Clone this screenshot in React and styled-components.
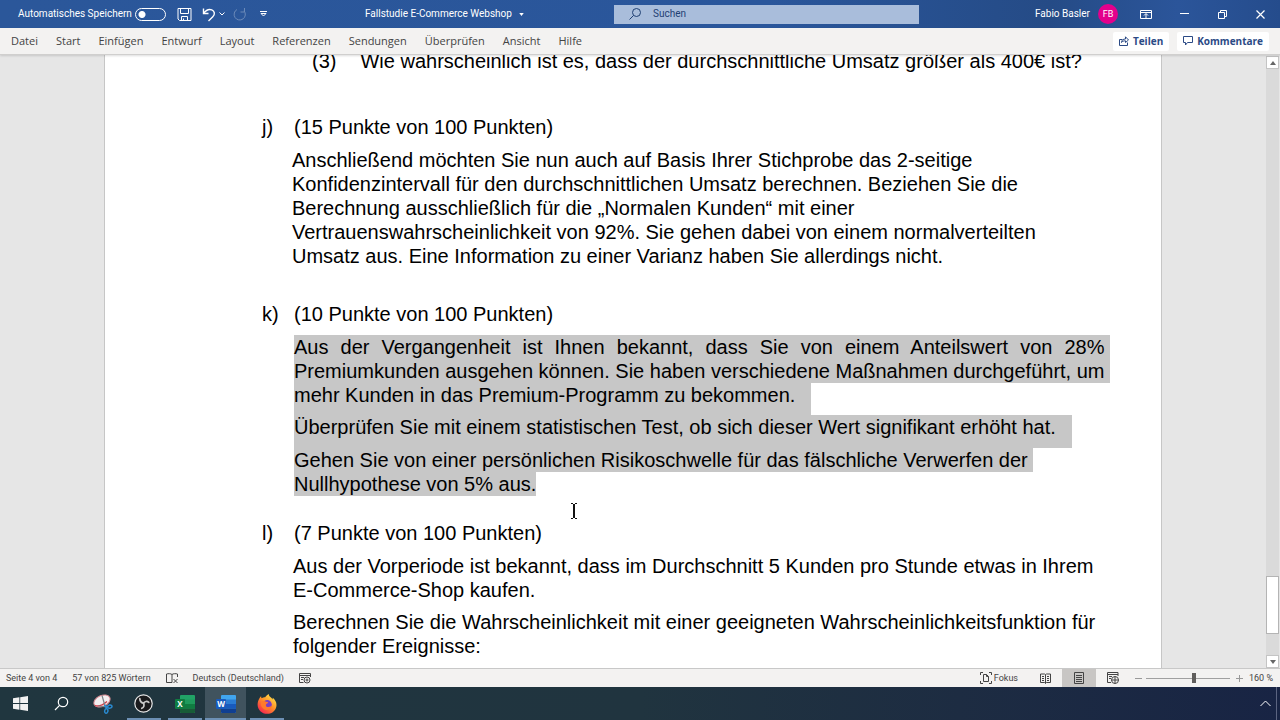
import React from "react";
import styled, { createGlobalStyle } from "styled-components";

const GlobalStyle = createGlobalStyle`
  *, *::before, *::after { box-sizing: border-box; }
  html, body, #root { height: 100%; }
  body { margin: 0; overflow: hidden; font-family: "Open Sans", "Noto Sans", sans-serif; }
  button { font: inherit; color: inherit; background: none; border: 0; padding: 0; margin: 0; }
  svg { display: block; flex: none; }
  p, h2 { margin: 0; }
`;

const Window = styled.div`
  height: 100vh;
  display: flex;
  flex-direction: column;
  background: #e6e6e6;
`;

const TitleBar = styled.header`
  flex: none;
  height: 28px;
  display: grid;
  grid-template-columns: 614fr 305fr 361fr;
  align-items: center;
  background: linear-gradient(90deg, #2b579a 0%, #2a569b 60%, #254b86 82%, #2b559a 92%, #254c8c 100%);
  color: #fff;
  font-family: Roboto, sans-serif;
  font-size: 10px;
  line-height: 16px;
`;

const QuickAccess = styled.div`
  display: flex;
  align-items: center;
  padding-left: 18px;
`;

const AutoSave = styled.label`
  display: flex;
  align-items: center;
  justify-content: space-between;
  width: 148px;
  white-space: nowrap;
`;

const Toggle = styled.input`
  appearance: none;
  flex: none;
  width: 31px;
  height: 13px;
  margin: 0;
  border: 1px solid #fff;
  border-radius: 7px;
  background: radial-gradient(circle at 6px 50%, #fff 3px, transparent 4px);
`;

const IconButton = styled.button`
  display: flex;
  align-items: center;
  justify-content: center;
  width: ${(p) => p.$w || 24}px;
  height: 24px;
`;

const DocTitle = styled.button`
  display: flex;
  align-items: center;
  gap: 7px;
  margin-left: 89px;
  white-space: nowrap;
`;

const SearchBox = styled.label`
  display: flex;
  align-items: center;
  gap: 12px;
  height: 19px;
  padding-left: 15px;
  background: #a9bddb;
  color: #1f3f73;
`;

const SearchInput = styled.input`
  flex: 1;
  min-width: 0;
  border: 0;
  padding: 0;
  background: none;
  font: inherit;
  color: inherit;
  &::placeholder { color: #1f3f73; opacity: 1; }
`;

const Account = styled.div`
  display: flex;
  align-items: center;
  justify-content: flex-end;
  padding-right: 1px;
`;

const Avatar = styled.span`
  width: 20px;
  height: 20px;
  margin: 0 9px 0 8px;
  border-radius: 50%;
  background: #e3008c;
  font-size: 9px;
  line-height: 20px;
  text-align: center;
`;

const WindowButton = styled(IconButton)`
  width: 38px;
`;

const Ribbon = styled.nav`
  position: relative;
  z-index: 1;
  flex: none;
  height: 27px;
  display: flex;
  align-items: center;
  justify-content: space-between;
  padding: 0 11px;
  background: #f3f2f1;
  border-bottom: 1px solid #d0cfce;
  box-shadow: 0 1px 2px #0002;
  color: #444;
  font-size: 11px;
  line-height: 16px;
`;

const Tabs = styled.div`
  display: flex;
  gap: 18px;
`;

const Tab = styled.button`
  white-space: nowrap;
`;

const Actions = styled.div`
  display: flex;
  gap: 8px;
`;

const Action = styled.button`
  && {
    display: flex;
    align-items: center;
    gap: 4px;
    height: 19px;
    padding: 0 6px;
    border-radius: 2px;
    background: #fff;
    color: #2b4a85;
    font-size: 10px;
    font-weight: 700;
  }
`;

const Workspace = styled.main`
  flex: 1;
  min-height: 0;
  display: flex;
`;

const Canvas = styled.div`
  flex: 1;
  min-width: 0;
  overflow: hidden;
  display: flex;
  padding: 0 104px;
`;

const Page = styled.article`
  flex: 1;
  min-width: 0;
  padding-left: 157px;
  background: #fff;
  border: solid #c6c6c6;
  border-width: 0 1px;
  color: #000;
  font-family: "Liberation Sans", Arial, sans-serif;
  font-size: 20px;
  line-height: 24px;
  white-space: nowrap;
`;

const Question = styled.div`
  display: flex;
  gap: 24px;
  padding-left: 50px;
  margin-top: -6px;
`;

const Task = styled.section`
  margin-top: ${(p) => p.$space}px;
`;

const TaskHead = styled.h2`
  display: grid;
  grid-template-columns: 32px 1fr;
  font-size: inherit;
  font-weight: 400;
  line-height: 24px;
`;

const Para = styled.p`
  margin: ${(p) => p.$space ?? 9}px 0 0 ${(p) => p.$indent ?? 30}px;
`;

const Selection = styled.div`
  width: max-content;
  margin: 9px 0 0 32px;
`;

const SelectedLine = styled.div`
  width: ${(p) => (p.$fill ? "100%" : "fit-content")};
  padding-right: ${(p) => p.$tail}px;
  padding-bottom: ${(p) => p.$after || 0}px;
  background: #c7c7c7;
  text-align-last: ${(p) => (p.$fill ? "justify" : "left")};
`;

const ScrollBar = styled.div`
  flex: none;
  width: 14px;
  display: flex;
  flex-direction: column;
  background: #dadada;
  border: solid #e6e6e6;
  border-width: 1px 1px 0 0;
  color: #666;
`;

const ScrollTrack = styled.div`
  flex: 1;
  display: grid;
  grid-template-rows: 504fr 58fr 21fr;
`;

const ScrollThumb = styled.div`
  grid-row: 2;
  background: #fff;
  border: 1px solid #b4b4b4;
`;

const ScrollArrow = styled.button`
  && {
    display: flex;
    align-items: center;
    justify-content: center;
    height: 13px;
    background: #fff;
    border: 1px solid #c4c4c4;
  }
`;

const StatusBar = styled.footer`
  flex: none;
  height: 19px;
  display: flex;
  align-items: center;
  justify-content: space-between;
  padding: 0 7px 0 6px;
  background: #f3f2f1;
  border-top: 1px solid #c8c8c8;
  color: #444;
  font-family: Roboto, sans-serif;
  font-size: 9px;
  line-height: 16px;
  white-space: nowrap;
`;

const StatusGroup = styled.div`
  display: flex;
  align-items: center;
  gap: ${(p) => p.$gap}px;
  height: 100%;
`;

const ViewButton = styled.button`
  && {
    display: flex;
    align-items: center;
    justify-content: center;
    gap: 2px;
    min-width: 34px;
    height: 100%;
    background: ${(p) => (p.$on ? "#c8c6c4" : "none")};
  }
`;

const ZoomButton = styled(IconButton)`
  && { color: #999; }
`;

const Zoom = styled.input`
  appearance: none;
  width: 84px;
  height: 10px;
  margin: 0;
  background: linear-gradient(#a0a0a0, #a0a0a0) center / 100% 1px no-repeat;
  &::-webkit-slider-thumb {
    appearance: none;
    width: 4px;
    height: 10px;
    background: #605e5c;
  }
`;

const TaskBar = styled.nav`
  flex: none;
  height: 33px;
  display: flex;
  align-items: stretch;
  justify-content: space-between;
  background: linear-gradient(90deg, #20363f 0%, #20343f 50%, #1d2c42 75%, #182444 100%);
  color: #fff;
`;

const Apps = styled.div`
  display: flex;
`;

const AppButton = styled.button`
  && {
    display: flex;
    align-items: center;
    justify-content: center;
    width: 41px;
    background-color: ${(p) => (p.$active ? "#40535e" : "transparent")};
    background-image: ${(p) => (p.$open ? "linear-gradient(#6d90b4, #6d90b4)" : "none")};
    background-repeat: no-repeat;
    background-position: bottom center;
    background-size: ${(p) => (p.$active ? 41 : 34)}px 2px;
  }
`;

const Tray = styled.div`
  display: flex;
  align-items: center;
  margin-right: 3px;
  border-right: 1px solid #5b6480;
`;

const TextCursor = styled.svg`
  position: absolute;
  left: 570px;
  top: 503px;
`;

const Stroke = ({ w = 14, h = 14, d, sw = 1, children, ...rest }) => (
  <svg width={w} height={h} viewBox={`0 0 ${w} ${h}`} fill="none" stroke="currentColor" strokeWidth={sw} {...rest}>
    {d && <path d={d} />}
    {children}
  </svg>
);

const Caret = ({ up, w = 6, h = 4 }) => (
  <svg width={w} height={h} viewBox="0 0 6 4" fill="currentColor">
    <path d={up ? "M0 4 3 0l3 4z" : "M0 0h6L3 4z"} />
  </svg>
);

const Windows = () => (
  <svg width="15" height="15" viewBox="0 0 15 15" fill="#f2f2f2">
    <path d="M0 2.2 6.4 1.3v5.8H0zM7.2 1.2 15 0v7.1H7.2zM0 7.9h6.4v5.8L0 12.8zM7.2 7.9H15V15l-7.8-1.2z" />
  </svg>
);

const Snip = () => (
  <svg width="20" height="20" viewBox="0 0 20 20">
    <ellipse cx="9" cy="7" rx="8.500" ry="5.500" transform="rotate(-24 9 7)" fill="#f3eef0" stroke="#d98a92" strokeWidth="1" />
    <path d="M2 11.500c3 1 8-.5 12-4" fill="none" stroke="#cf3b47" strokeWidth="1.200" />
    <path d="M9 1.500l3.500 12M5 12l9 1" stroke="#7d8389" strokeWidth="1.200" />
    <g fill="none" stroke="#2a8ad0" strokeWidth="1.5">
      <path d="M11 11.500l4 1.500M12 11l1.500 3.500" />
      <ellipse cx="16.800" cy="12.600" rx="2.200" ry="1.600" transform="rotate(-15 16.800 12.600)" />
      <ellipse cx="13.300" cy="17" rx="1.600" ry="2.200" transform="rotate(12 13.300 17)" />
    </g>
  </svg>
);

const Obs = () => (
  <svg width="19" height="19" viewBox="0 0 19 19">
    <circle cx="9.5" cy="9.5" r="8.7" fill="#1b1b1d" stroke="#e8e8e8" strokeWidth="1.2" />
    <g fill="none" stroke="#c9c9c9" strokeWidth="1.7" strokeLinecap="round">
      <path d="M5.800 4.600c.1 2.400 1.500 4 3.700 4.600" />
      <path d="M9.500 9.200c1.200-2 3.600-2.300 5.300-.8" />
      <path d="M9.500 9.300c1.100 2 .4 4.100-1.700 5" />
    </g>
  </svg>
);

const Office = ({ letter, colors }) => (
  <svg width="20" height="18" viewBox="0 0 20 18">
    <rect x="5" y="0" width="15" height="18" rx="1" fill={colors[0]} />
    <path d="M5 4.500h15V9H5z" fill={colors[1]} />
    <path d="M5 9h15v4.500H5z" fill={colors[2]} />
    <path d="M5 13.500h15V17a1 1 0 0 1-1 1H6a1 1 0 0 1-1-1z" fill={colors[3]} />
    <rect x="0" y="4" width="10" height="10" rx="1" fill={colors[4]} />
    <text x="5" y="12" fill="#fff" fontSize="8" fontWeight="700" textAnchor="middle">{letter}</text>
  </svg>
);

const Firefox = () => (
  <svg width="20" height="20" viewBox="0 0 20 20">
    <defs>
      <linearGradient id="fx" x1="0.85" y1="0.1" x2="0.2" y2="0.95">
        <stop offset="0" stopColor="#ffe14a" />
        <stop offset="0.45" stopColor="#ff9328" />
        <stop offset="1" stopColor="#f5264f" />
      </linearGradient>
    </defs>
    <path d="M2.500 4.200c.4-.9 1-1.600 1.600-2-.1.900.2 1.600.7 2.100 1-.8 2.100-1.100 3.400-1.100C9.200 2 10 .9 11.800 0c-.2 2 1.200 2.700 2.700 4 .5.400.8.900 1 1.400l.3-1.600c2.200 1.900 3.700 4.400 3.700 7.100 0 5-4.100 8.900-9.400 8.900S.6 15.800.6 10.700c0-2.500.7-4.800 1.900-6.500z" fill="url(#fx)" />
    <circle cx="10.300" cy="10.600" r="4.500" fill="#7a3fc4" />
    <path d="M3.800 8.200c1.600-1.400 3.600-1.600 5.300-.4 1.300.1 2 .5 2.200 1.100-1.300.3-2.200.8-2.400 2-.2 1.500 1 2.300 2.600 2.100 1.600-.2 2.700-1 3.600-.9-1 2.600-3 4-5.500 3.800-3.600-.2-6.100-3.500-5.800-7.700z" fill="#ff7a2b" />
  </svg>
);

export default function App() {
  return (
    <Window>
      <GlobalStyle />
      <TitleBar>
        <QuickAccess>
          <AutoSave>
            Automatisches Speichern
            <Toggle type="checkbox" role="switch" />
          </AutoSave>
          <IconButton $w={37} aria-label="Speichern">
            <Stroke w={15} h={15} d="M1 1.500h13v12H2.500L1 12zM3.500 1.500v5h8v-5M4.500 13.500v-4h6v4M6.500 13.500v-2" />
          </IconButton>
          <IconButton $w={12} aria-label="Rückgängig">
            <Stroke w={14} h={15} sw={1.4} d="M1.500 1.500v5h5M1.500 6.500C4 3 7 1.800 9.800 2.800c3 1.200 3.400 4.600 1 6.900L6.500 14" />
          </IconButton>
          <IconButton $w={14} aria-label="Rückgängig-Liste"><Stroke w={6} h={4} d="M.5.5 3 3 5.500.5" /></IconButton>
          <IconButton $w={22} aria-label="Wiederholen">
            <Stroke w={14} h={14} opacity="0.3" d="M11.500 1v4h-4M4 2.500A5.600 5.600 0 1 0 11 3.800" />
          </IconButton>
          <IconButton $w={25} aria-label="Symbolleiste anpassen"><Stroke w={7} h={6} d="M0 .5h7M1 2.500h5L3.500 5z" /></IconButton>
          <DocTitle>Fallstudie E-Commerce Webshop <Caret w={5} h={3} /></DocTitle>
        </QuickAccess>
        <SearchBox>
          <Stroke w={12} h={12}><circle cx="7.500" cy="4.500" r="4" /><path d="M4.500 7.500.5 11.500" /></Stroke>
          <SearchInput placeholder="Suchen" aria-label="Suchen" />
        </SearchBox>
        <Account>
          <span>Fabio Basler</span>
          <Avatar>FB</Avatar>
          <WindowButton aria-label="Menüband-Optionen">
            <Stroke w={12} h={9}><path d="M.5.5h11v8H.5zM.5 2.500h11M6 8V4M4 5.500l2-2 2 2" /></Stroke>
          </WindowButton>
          <WindowButton aria-label="Minimieren"><Stroke w={9} h={2} d="M0 .5h9" /></WindowButton>
          <WindowButton aria-label="Verkleinern"><Stroke w={9} h={9} d="M.5 2.500h6v6h-6zM2.500 2.500v-2h6v6h-2" /></WindowButton>
          <WindowButton aria-label="Schließen"><Stroke w={9} h={9} sw={1.2} d="M.5.5l8 8M8.500.5l-8 8" /></WindowButton>
        </Account>
      </TitleBar>

      <Ribbon>
        <Tabs>
          {["Datei", "Start", "Einfügen", "Entwurf", "Layout", "Referenzen", "Sendungen", "Überprüfen", "Ansicht", "Hilfe"].map((t) => (
            <Tab key={t}>{t}</Tab>
          ))}
        </Tabs>
        <Actions>
          <Action>
            <Stroke w={10} h={10} d="M3.500 3.500h-3v6h8v-3M2.500 6.500c.3-2.600 1.700-3.500 4-3.500V.8L9.500 4 6.500 6.500V4.800c-2 0-3 .4-4 1.700z" />
            Teilen
          </Action>
          <Action>
            <Stroke w={10} h={10} d="M.5.5h9v6h-5L2.500 9V6.500h-2z" />
            Kommentare
          </Action>
        </Actions>
      </Ribbon>

      <Workspace>
        <Canvas>
          <Page>
            <Question><span>(3)</span><span>Wie wahrscheinlich ist es, dass der durchschnittliche Umsatz größer als 400€ ist?</span></Question>
            <Task $space={42}>
              <TaskHead><span>j)</span><span>(15 Punkte von 100 Punkten)</span></TaskHead>
              <Para>
                Anschließend möchten Sie nun auch auf Basis Ihrer Stichprobe das 2-seitige<br />
                Konfidenzintervall für den durchschnittlichen Umsatz berechnen. Beziehen Sie die<br />
                Berechnung ausschließlich für die „Normalen Kunden“ mit einer<br />
                Vertrauenswahrscheinlichkeit von 92%. Sie gehen dabei von einem normalverteilten<br />
                Umsatz aus. Eine Information zu einer Varianz haben Sie allerdings nicht.
              </Para>
            </Task>
            <Task $space={34}>
              <TaskHead><span>k)</span><span>(10 Punkte von 100 Punkten)</span></TaskHead>
              <Selection>
                <SelectedLine $fill $tail={5}>Aus der Vergangenheit ist Ihnen bekannt, dass Sie von einem Anteilswert von 28%</SelectedLine>
                <SelectedLine $fill $tail={5}>Premiumkunden ausgehen können. Sie haben verschiedene Maßnahmen durchgeführt, um</SelectedLine>
                <SelectedLine $tail={16} $after={8}>mehr Kunden in das Premium-Programm zu bekommen.</SelectedLine>
                <SelectedLine $tail={16} $after={9}>Überprüfen Sie mit einem statistischen Test, ob sich dieser Wert signifikant erhöht hat.</SelectedLine>
                <SelectedLine $tail={5}>Gehen Sie von einer persönlichen Risikoschwelle für das fälschliche Verwerfen der</SelectedLine>
                <SelectedLine $tail={0}>Nullhypothese von 5% aus.</SelectedLine>
              </Selection>
            </Task>
            <Task $space={25}>
              <TaskHead><span>l)</span><span>(7 Punkte von 100 Punkten)</span></TaskHead>
              <Para $indent={31}>
                Aus der Vorperiode ist bekannt, dass im Durchschnitt 5 Kunden pro Stunde etwas in Ihrem<br />
                E-Commerce-Shop kaufen.
              </Para>
              <Para $indent={31} $space={8}>
                Berechnen Sie die Wahrscheinlichkeit mit einer geeigneten Wahrscheinlichkeitsfunktion für<br />
                folgender Ereignisse:
              </Para>
            </Task>
          </Page>
        </Canvas>
        <ScrollBar>
          <ScrollArrow aria-label="Nach oben"><Caret up /></ScrollArrow>
          <ScrollTrack><ScrollThumb /></ScrollTrack>
          <ScrollArrow aria-label="Nach unten"><Caret /></ScrollArrow>
        </ScrollBar>
      </Workspace>

      <StatusBar>
        <StatusGroup $gap={15}>
          <span>Seite 4 von 4</span>
          <span>57 von 825 Wörtern</span>
          <Stroke w={12} h={11} d="M6 1.500v8M6 1.500C5 .5 2 .5.5 1v8.500H6M6 1.500C7 .5 10 .5 11.500 1v3M7.500 6l4 4M11.500 6l-4 4" />
          <span>Deutsch (Deutschland)</span>
          <Stroke w={12} h={11}><path d="M11.500 4V.5H.5v9h4M.5 2.500h11M2 4.500h3M2 6.500h2" /><circle cx="8" cy="7" r="3" /><circle cx="8" cy="7" r="1" /></Stroke>
        </StatusGroup>
        <StatusGroup $gap={0}>
          <ViewButton>
            <Stroke w={12} h={12} d="M3 .5H.5V3M9 .5h2.500V3M.5 9v2.500H3M11.500 9v2.500H9M3.500 2.500h3l2 2v5h-5zM6.500 2.500v2h2" />
            Fokus
          </ViewButton>
          <IconButton as="span" $w={10} />
          <ViewButton aria-label="Lesemodus">
            <Stroke w={11} h={11} d="M5.500 1.500v9M.5 1h4l1 .7L6.500 1h4v8.500h-4l-1 .8-1-.8h-4zM2 3.500h2M2 5.500h2M2 7.500h2M7 3.500h2M7 5.500h2M7 7.500h2" />
          </ViewButton>
          <ViewButton $on aria-label="Seitenlayout">
            <Stroke w={10} h={12} d="M.5.5h9v11h-9zM2 3.500h6M2 5.500h6M2 7.500h6M2 9.500h6" />
          </ViewButton>
          <ViewButton aria-label="Weblayout">
            <Stroke w={12} h={12}><path d="M11 4V.5H.5v10H4M.5 2.500H11M2 4.500h3M2 6.500h2" /><circle cx="8" cy="8" r="3.500" /><path d="M4.500 8h7M8 4.500v7" /></Stroke>
          </ViewButton>
          <ZoomButton $w={16} aria-label="Verkleinern"><Stroke w={7} h={7} d="M0 3.500h7" /></ZoomButton>
          <Zoom type="range" min="0" max="100" defaultValue="57" aria-label="Zoom" />
          <ZoomButton $w={19} aria-label="Vergrößern"><Stroke w={7} h={7} d="M0 3.500h7M3.500 0v7" /></ZoomButton>
          <span>160 %</span>
        </StatusGroup>
      </StatusBar>

      <TaskBar>
        <Apps>
          <AppButton aria-label="Start"><Windows /></AppButton>
          <AppButton aria-label="Suche"><Stroke w={15} h={15} sw={1.2}><circle cx="9" cy="6" r="4.700" /><path d="M5.600 9.400 1 14" /></Stroke></AppButton>
          <AppButton aria-label="Snipping Tool"><Snip /></AppButton>
          <AppButton $open aria-label="OBS"><Obs /></AppButton>
          <AppButton $open aria-label="Excel"><Office letter="X" colors={["#21a366", "#1f9a5c", "#107c41", "#185c37", "#107c41"]} /></AppButton>
          <AppButton $open $active aria-label="Word"><Office letter="W" colors={["#41a5ee", "#2b7cd3", "#185abd", "#103f91", "#185abd"]} /></AppButton>
          <AppButton $open aria-label="Firefox"><Firefox /></AppButton>
        </Apps>
        <Tray>
          <IconButton $w={22} aria-label="Ausgeblendete Symbole"><Stroke w={11} h={7} d="M.5 6 5.500 1l5 5" /></IconButton>
        </Tray>
      </TaskBar>

      <TextCursor width="8" height="16" viewBox="0 0 8 16" fill="none" stroke="#111">
        <path d="M1 .5h2M5 .5h2M1 15.500h2M5 15.500h2" />
        <path d="M4 1v14" strokeWidth="2" />
      </TextCursor>
    </Window>
  );
}
